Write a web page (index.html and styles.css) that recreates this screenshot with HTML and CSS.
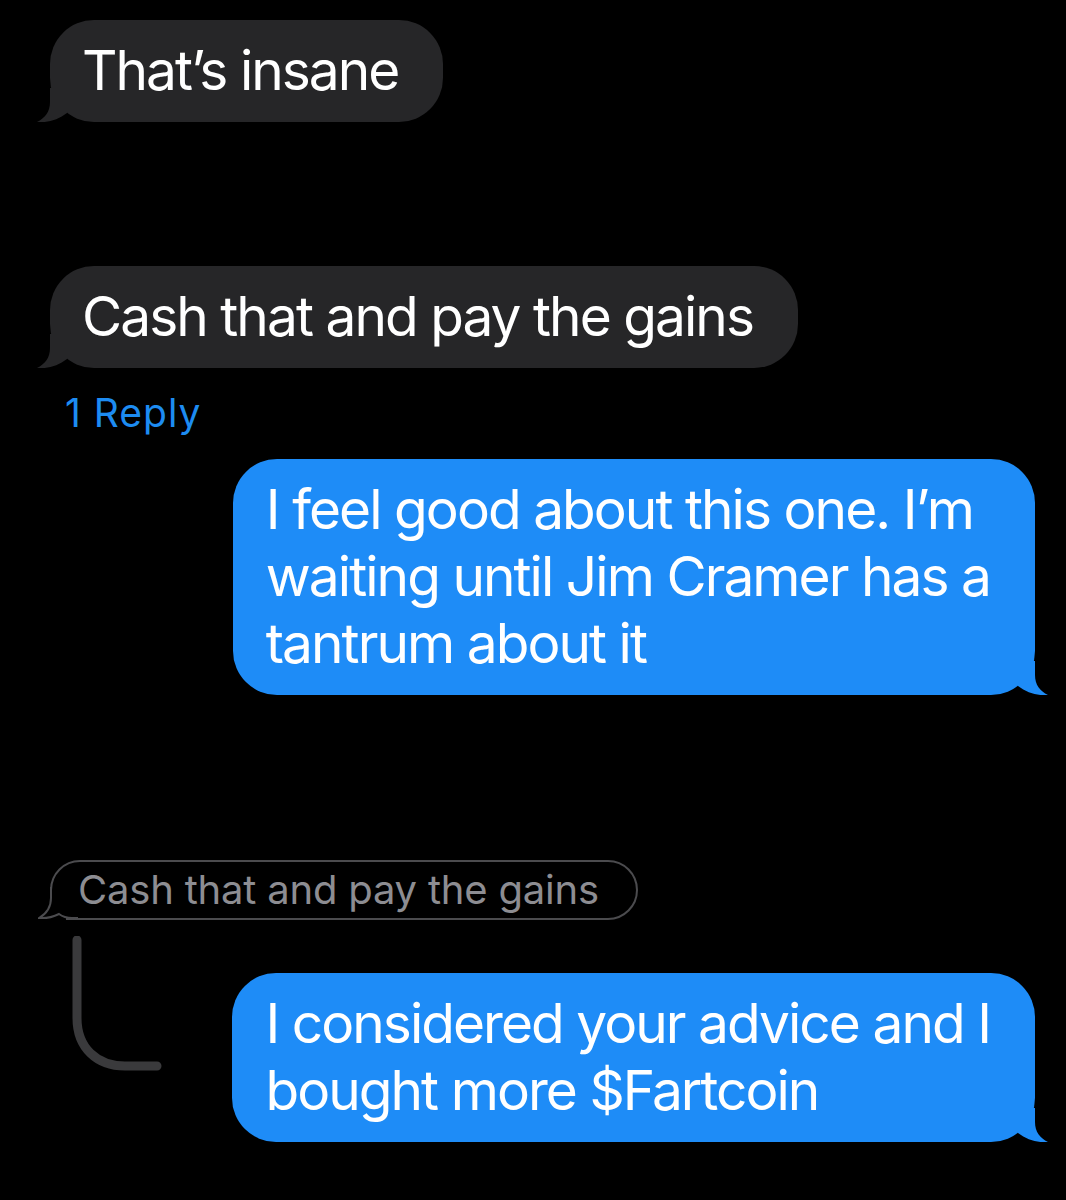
FILE: index.html
```html
<!DOCTYPE html>
<html>
<head>
    <title>Messages</title>
    <meta charset="utf-8">
    <meta name="viewport" content="width=device-width, initial-scale=1">
    <link rel="stylesheet" href="styles.css">
</head>
<body>
<div class="thread">
    <div class="msg in first">
        That’s insane
        <svg class="tail" width="40" height="34" viewBox="0 0 40 34"><path d="M13,0 V14 C13,24 8,30 0,34 C10,35 21,32 30,25 V0 Z"/></svg>
    </div>
    <div class="msg in second">
        Cash that and pay the gains
        <svg class="tail" width="40" height="34" viewBox="0 0 40 34"><path d="M13,0 V14 C13,24 8,30 0,34 C10,35 21,32 30,25 V0 Z"/></svg>
    </div>
    <div class="reply-count">1 Reply</div>
    <div class="msg out first-out">
        I feel good about this one. I’m<br>waiting until Jim Cramer has a<br>tantrum about it
        <svg class="tail" width="40" height="34" viewBox="0 0 40 34"><path d="M13,0 V14 C13,24 8,30 0,34 C10,35 21,32 30,25 V0 Z"/></svg>
    </div>
    <div class="quoted">
        <svg class="qtail" width="40" height="33" viewBox="0 0 40 33">
            <rect x="9" y="8" width="19" height="25" fill="#000"/>
            <path d="M13,0 V11 C13,21 8,27 1,31 C8,31.5 15,30 21,27 C25,30 29,31 34,31 H40"/>
        </svg>
        <span>Cash that and pay the gains</span>
    </div>
    <div class="reply-row">
        <svg class="connector" width="110" height="140" viewBox="0 0 110 140">
            <path d="M17,4 V82 C17,112 37,130 65,130 H97"/>
        </svg>
        <div class="msg out second-out">
            I considered your advice and I<br>bought more $Fartcoin
            <svg class="tail" width="40" height="34" viewBox="0 0 40 34"><path d="M13,0 V14 C13,24 8,30 0,34 C10,35 21,32 30,25 V0 Z"/></svg>
        </div>
    </div>
</div>
</body>
</html>
```

FILE: styles.css
```css
* {
    box-sizing: border-box;
}

body {
    margin: 0;
    background-color: #000;
    font-family: Inter, "Noto Sans", sans-serif;
    color: #fff;
    width: 1066px;
    height: 1200px;
    overflow: hidden;
}

.thread {
    display: flex;
    flex-direction: column;
    align-items: flex-start;
    padding: 20px 31px 0 50px;
}

.msg {
    position: relative;
    font-size: 55px;
    line-height: 67px;
    letter-spacing: -1.95px;
    white-space: nowrap;
    padding: 17px 45px 18px 32px;
    border-radius: 44px;
}

.msg .tail {
    position: absolute;
    bottom: 0;
    left: -13px;
}

.in {
    background-color: #262628;
}

.in .tail path {
    fill: #262628;
}

.out {
    background-color: #1e8cf7;
    padding-left: 33px;
    align-self: flex-end;
}

.out .tail {
    left: auto;
    right: -13px;
    transform: scaleX(-1);
}

.out .tail path {
    fill: #1e8cf7;
}

.second {
    margin-top: 144px;
}

.reply-count {
    margin: 22px 0 0 15px;
    font-size: 39px;
    line-height: 46px;
    letter-spacing: 1px;
    color: #1d8cf2;
}

.first-out {
    margin-top: 23px;
}

.quoted {
    position: relative;
    margin-top: 165px;
    font-size: 40px;
    line-height: 46px;
    letter-spacing: -0.2px;
    color: #8d8d92;
    padding: 5px 37px 5px 26px;
    border: 2px solid #4b4b4e;
    border-radius: 30px 30px 30px 0;
}

.quoted span {
    position: relative;
}

.qtail {
    position: absolute;
    left: -14px;
    bottom: -2px;
}

.qtail path {
    fill: none;
    stroke: #4b4b4e;
    stroke-width: 2;
}

.reply-row {
    display: flex;
    align-items: flex-start;
    align-self: stretch;
    margin-top: 16px;
}

.connector {
    margin-left: 10px;
    flex-shrink: 0;
}

.connector path {
    fill: none;
    stroke: #3a3a3c;
    stroke-width: 9;
    stroke-linecap: round;
}

.second-out {
    margin-top: 37px;
    margin-left: auto;
}
```
